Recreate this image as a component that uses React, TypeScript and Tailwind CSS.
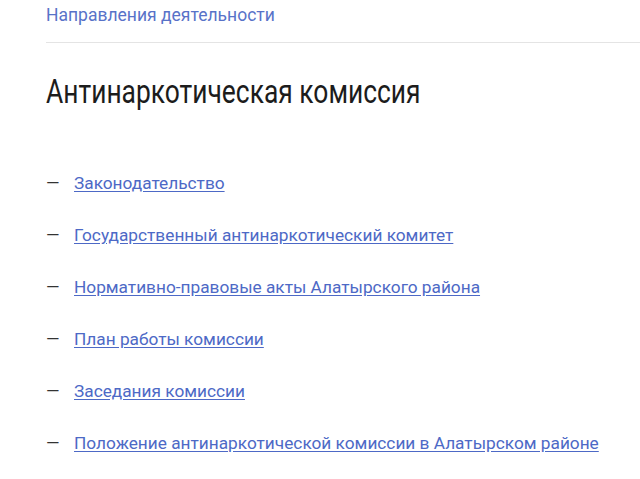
import React from 'react';

const links = [
  'Законодательство',
  'Государственный антинаркотический комитет',
  'Нормативно-правовые акты Алатырского района',
  'План работы комиссии',
  'Заседания комиссии',
  'Положение антинаркотической комиссии в Алатырском районе',
];

export default function App() {
  return (
    <div className="min-h-screen w-full bg-white pl-[46px] font-['Roboto',sans-serif]">
      {/* Breadcrumb */}
      <div className="pt-[2px] pb-[14px]">
        <a href="#" className="text-[17.5px] leading-[26px] text-[#5872c8]">
          Направления деятельности
        </a>
      </div>
      <div className="h-px bg-[#e4e4e4]" />

      {/* Title */}
      <h1 className="mt-[26px] origin-left scale-x-[0.8] text-[33px] leading-[46px] text-[#1c1c1c] whitespace-nowrap">
        Антинаркотическая комиссия
      </h1>

      {/* Links */}
      <ul className="mt-[56px] flex flex-col gap-[28px]">
        {links.map((l) => (
          <li key={l} className="flex items-center text-[17.25px] leading-[24px]">
            <span className="w-[28px] text-[#333]">—</span>
            <a href="#" className="text-[#4d69c6] underline underline-offset-2">
              {l}
            </a>
          </li>
        ))}
      </ul>
    </div>
  );
}
